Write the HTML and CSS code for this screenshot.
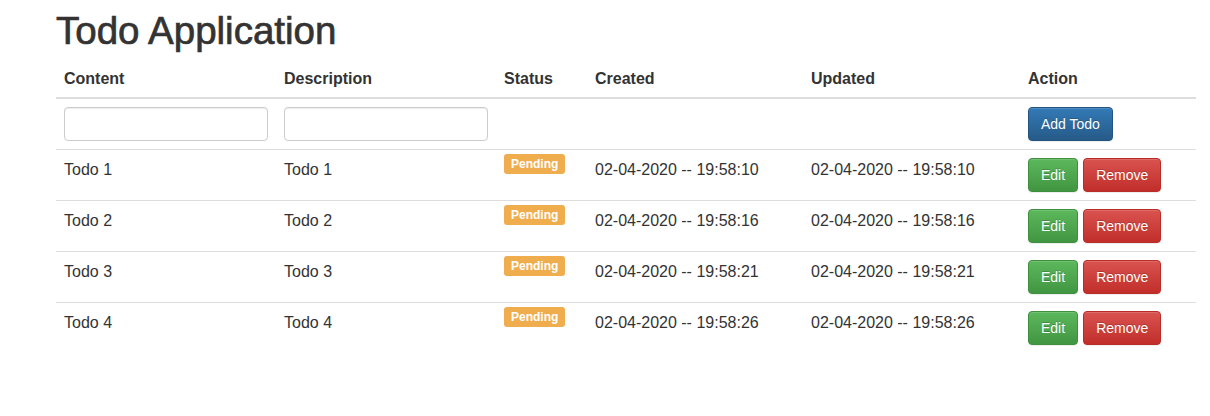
FILE: index.html
```html
<!DOCTYPE html>
<html lang="en">
<head>
<meta charset="utf-8">
<title>Todo Application</title>
<link rel="stylesheet" href="styles.css">
</head>
<body>
<div class="container">
  <h1 class="title">Todo Application</h1>
  <table class="todo-table">
    <colgroup>
      <col class="c-content">
      <col class="c-desc">
      <col class="c-status">
      <col class="c-created">
      <col class="c-updated">
      <col class="c-action">
    </colgroup>
    <thead>
      <tr>
        <th>Content</th>
        <th>Description</th>
        <th>Status</th>
        <th>Created</th>
        <th>Updated</th>
        <th>Action</th>
      </tr>
    </thead>
    <tbody>
      <tr>
        <td><input class="field" type="text"></td>
        <td><input class="field" type="text"></td>
        <td></td>
        <td></td>
        <td></td>
        <td><button class="btn btn-primary">Add Todo</button></td>
      </tr>
      <tr>
        <td>Todo 1</td>
        <td>Todo 1</td>
        <td><span class="label">Pending</span></td>
        <td>02-04-2020 -- 19:58:10</td>
        <td>02-04-2020 -- 19:58:10</td>
        <td><div class="actions"><button class="btn btn-success">Edit</button><button class="btn btn-danger">Remove</button></div></td>
      </tr>
      <tr>
        <td>Todo 2</td>
        <td>Todo 2</td>
        <td><span class="label">Pending</span></td>
        <td>02-04-2020 -- 19:58:16</td>
        <td>02-04-2020 -- 19:58:16</td>
        <td><div class="actions"><button class="btn btn-success">Edit</button><button class="btn btn-danger">Remove</button></div></td>
      </tr>
      <tr>
        <td>Todo 3</td>
        <td>Todo 3</td>
        <td><span class="label">Pending</span></td>
        <td>02-04-2020 -- 19:58:21</td>
        <td>02-04-2020 -- 19:58:21</td>
        <td><div class="actions"><button class="btn btn-success">Edit</button><button class="btn btn-danger">Remove</button></div></td>
      </tr>
      <tr>
        <td>Todo 4</td>
        <td>Todo 4</td>
        <td><span class="label">Pending</span></td>
        <td>02-04-2020 -- 19:58:26</td>
        <td>02-04-2020 -- 19:58:26</td>
        <td><div class="actions"><button class="btn btn-success">Edit</button><button class="btn btn-danger">Remove</button></div></td>
      </tr>
    </tbody>
  </table>
</div>
</body>
</html>
```

FILE: styles.css
```css
* { box-sizing: border-box; }

html, body {
  margin: 0;
  padding: 0;
  background: #fff;
}

body {
  font-family: "Liberation Sans", Arial, Helvetica, sans-serif;
  font-size: 16px;
  line-height: 1.5;
  color: #333;
}

.container {
  padding: 0 14px 0 56px;
}

.title {
  margin: 10px 0 5px;
  font-size: 38.5px;
  font-weight: 500;
  line-height: 1.1;
  color: #333;
  -webkit-text-stroke: 0.7px #333;
}

.todo-table {
  width: 1140px;
  border-collapse: collapse;
  border-spacing: 0;
  table-layout: fixed;
}

.c-content { width: 220px; }
.c-desc { width: 220px; }
.c-status { width: 91px; }
.c-created { width: 216px; }
.c-updated { width: 217px; }
.c-action { width: 176px; }

.todo-table th,
.todo-table td {
  padding: 8px;
  text-align: left;
  vertical-align: top;
  line-height: 24px;
}

.todo-table th {
  padding: 10px 8px 6px;
  font-weight: bold;
  border-bottom: 2px solid #ddd;
}

.todo-table td {
  border-top: 1px solid #ddd;
}

.todo-table tbody tr:first-child td {
  border-top: 2px solid #ddd;
}

.field {
  display: block;
  width: 100%;
  height: 34px;
  padding: 6px 12px;
  font-family: inherit;
  font-size: 14px;
  color: #555;
  background: #fff;
  border: 1px solid #ccc;
  border-radius: 4px;
  box-shadow: inset 0 1px 1px rgba(0, 0, 0, .075);
}

.label {
  display: inline-block;
  margin-top: -4px;
  vertical-align: top;
  height: 20px;
  padding: 0 7px;
  font-size: 12px;
  font-weight: bold;
  line-height: 20px;
  color: #fff;
  background: #f0ad4e;
  border-radius: 3px;
}

.actions {
  display: flex;
  gap: 5px;
}

.btn {
  display: inline-block;
  height: 34px;
  padding: 6px 12px;
  font-family: inherit;
  font-size: 14px;
  line-height: 20px;
  color: #fff;
  border: 1px solid transparent;
  border-radius: 4px;
  text-shadow: 0 -1px 0 rgba(0, 0, 0, .2);
  box-shadow: inset 0 1px 0 rgba(255, 255, 255, .15), 0 1px 1px rgba(0, 0, 0, .075);
  cursor: pointer;
}

.btn-primary {
  background: linear-gradient(to bottom, #337ab7 0, #265a88 100%);
  border-color: #245580;
}

.btn-success {
  background: linear-gradient(to bottom, #5cb85c 0, #419641 100%);
  border-color: #3e8f3e;
}

.btn-danger {
  background: linear-gradient(to bottom, #d9534f 0, #c12e2a 100%);
  border-color: #b92c28;
}
```
